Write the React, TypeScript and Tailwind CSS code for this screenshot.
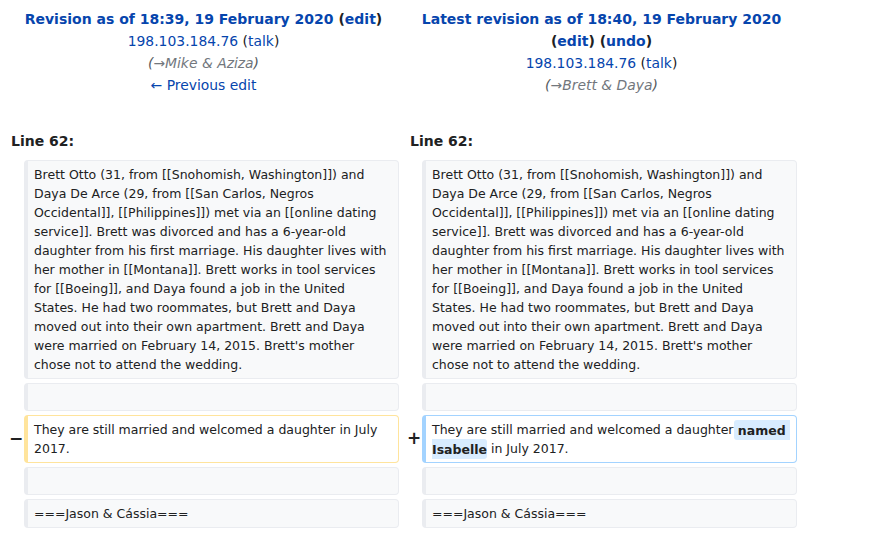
const link = "text-[#0645ad]";

function Cell({ kind, children }: { kind: "context" | "del" | "add"; children?: React.ReactNode }) {
  const styles = {
    context: "bg-[#f8f9fa] border-[#eaecf0]",
    del: "bg-white border-[#ffe49c]",
    add: "bg-white border-[#a3d3ff]",
  };
  return (
    <div
      className={`border border-l-4 rounded-[4px] pl-[6px] pr-[8px] py-[4px] min-h-[28px] leading-[19px] break-words ${styles[kind]}`}
    >
      {children}
    </div>
  );
}

function Marker({ sign, right }: { sign?: string; right?: boolean }) {
  return (
    <div
      className={`flex items-center justify-center text-[17px] font-bold text-[#202122] ${right ? "pl-[7px]" : ""}`}
    >
      {sign}
    </div>
  );
}

const context =
  "Brett Otto (31, from [[Snohomish, Washington]]) and Daya De Arce (29, from [[San Carlos, Negros Occidental]], [[Philippines]]) met via an [[online dating service]]. Brett was divorced and has a 6-year-old daughter from his first marriage. His daughter lives with her mother in [[Montana]]. Brett works in tool services for [[Boeing]], and Daya found a job in the United States. He had two roommates, but Brett and Daya moved out into their own apartment. Brett and Daya were married on February 14, 2015. Brett's mother chose not to attend the wedding.";

export default function App() {
  return (
    <div className="min-h-[534px] bg-white font-['DejaVu_Sans',sans-serif] text-[#202122] text-[12.5px] px-2 pt-[8px]">
      <div className="grid grid-cols-[16px_375px_23px_375px] gap-y-[4px]">
        {/* Revision headers */}
        <div className="col-span-2 text-center leading-[22px] text-[13.9px]">
          <div className="font-bold text-[14px]">
            <span className={link}>Revision as of 18:39, 19 February 2020</span> (<span className={link}>edit</span>)
          </div>
          <div>
            <span className={link}>198.103.184.76</span> (<span className={link}>talk</span>)
          </div>
          <div className="italic text-[#72777d]">
            <span className="text-[#54595d]">(</span>→Mike &amp; Aziza<span className="text-[#54595d]">)</span>
          </div>
          <div className={link}>← Previous edit</div>
        </div>
        <div className="col-span-2 text-center leading-[22px] text-[13.9px] pl-[7px]">
          <div className="font-bold text-[14px]">
            <span className={link}>Latest revision as of 18:40, 19 February 2020</span>
          </div>
          <div className="font-bold text-[14px]">
            (<span className={link}>edit</span>) (<span className={link}>undo</span>)
          </div>
          <div>
            <span className={link}>198.103.184.76</span> (<span className={link}>talk</span>)
          </div>
          <div className="italic text-[#72777d]">
            <span className="text-[#54595d]">(</span>→Brett &amp; Daya<span className="text-[#54595d]">)</span>
          </div>
        </div>

        {/* Line numbers */}
        <div className="col-span-2 pl-[3px] pt-[30px] pb-[4px] font-bold text-[14px] leading-[22px]">Line 62:</div>
        <div className="col-span-2 pl-[11px] pt-[30px] pb-[4px] font-bold text-[14px] leading-[22px]">Line 62:</div>

        {/* Context */}
        <Marker />
        <Cell kind="context">{context}</Cell>
        <Marker right />
        <Cell kind="context">{context}</Cell>

        <Marker />
        <Cell kind="context" />
        <Marker right />
        <Cell kind="context" />

        {/* Changed paragraph */}
        <Marker sign="−" />
        <Cell kind="del">They are still married and welcomed a daughter in July 2017.</Cell>
        <Marker sign="+" right />
        <Cell kind="add">
          They are still married and welcomed a daughter
          <span className="font-bold bg-[#d8ecff] rounded-[3px] py-[2.5px] whitespace-pre-wrap"> named Isabelle</span> in July 2017.
        </Cell>

        <Marker />
        <Cell kind="context" />
        <Marker right />
        <Cell kind="context" />

        <Marker />
        <Cell kind="context">===Jason &amp; Cássia===</Cell>
        <Marker right />
        <Cell kind="context">===Jason &amp; Cássia===</Cell>
      </div>
    </div>
  );
}
